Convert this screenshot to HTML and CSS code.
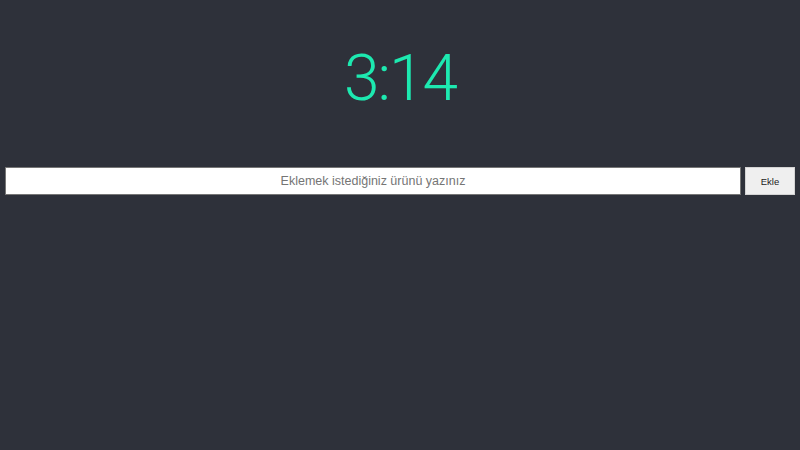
FILE: index.html
```html
<!DOCTYPE html>
<html lang="tr">
<head>
<meta charset="utf-8">
<link rel="stylesheet" href="styles.css">
</head>
<body>
<div class="clock">3:14</div>
<form class="add-row">
<input class="item-input" type="text" placeholder="Eklemek istediğiniz ürünü yazınız">
<button class="add-btn" type="button">Ekle</button>
</form>
</body>
</html>
```
FILE: styles.css
```css
html, body { margin: 0; height: 100%; }
body {
  background: #2e313a;
  font-family: "Liberation Sans", Arial, sans-serif;
  padding: 0 5px;
  box-sizing: border-box;
}
.clock {
  font-family: Roboto, sans-serif;
  font-weight: 300;
  font-size: 64px;
  letter-spacing: -2px;
  line-height: 82px;
  color: #1de9b0;
  text-align: center;
  padding-top: 38px;
  height: 129px;
}
.add-row {
  display: flex;
  gap: 4px;
  margin: 0;
}
.item-input {
  flex: 1;
  height: 28px;
  box-sizing: border-box;
  border: 1px solid #767676;
  background: #fff;
  font-family: "Liberation Sans", Arial, sans-serif;
  font-size: 12.5px;
  text-align: center;
  padding: 0 4px;
  margin: 0;
}
.item-input::placeholder { color: #757575; }
.add-btn {
  width: 50px;
  height: 28px;
  box-sizing: border-box;
  border: 1px solid #d4d4d4;
  background: #efefef;
  font-family: "Liberation Sans", Arial, sans-serif;
  font-size: 9.5px;
  color: #222;
  margin: 0;
  padding: 0;
}
```
